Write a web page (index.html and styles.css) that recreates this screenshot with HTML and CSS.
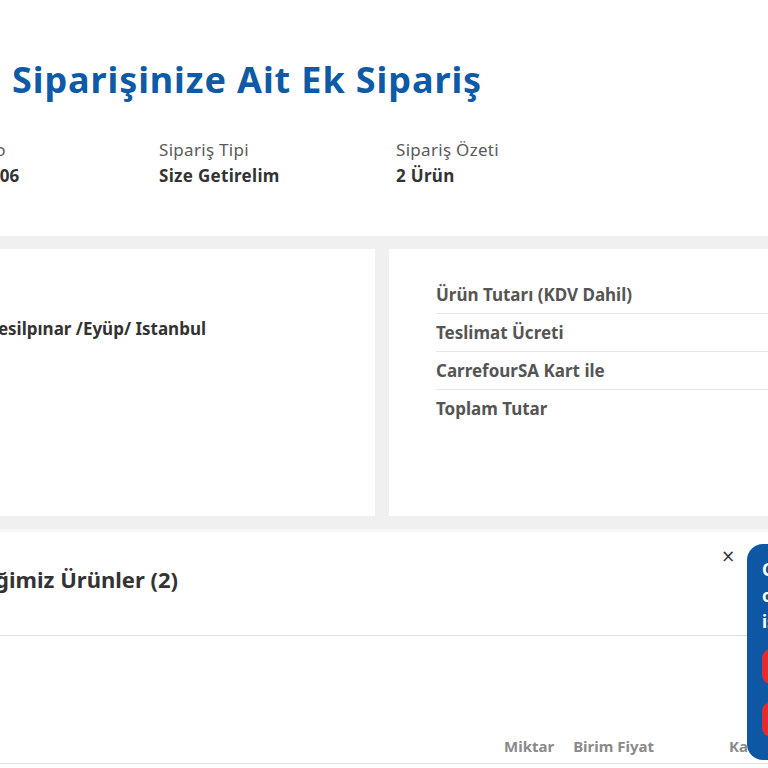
FILE: index.html
```html
<!DOCTYPE html>
<html lang="tr">
<head>
<meta charset="utf-8">
<title>Sipariş Detayı</title>
<link rel="stylesheet" href="styles.css">
</head>
<body>
<div class="page">
  <section class="header">
    <h1 class="title">Siparişinize Ait Ek Sipariş</h1>
    <div class="meta">
      <div class="meta-col">
        <div class="meta-label">Sipariş No</div>
        <div class="meta-value meta-value-id">1000726506</div>
      </div>
      <div class="meta-col">
        <div class="meta-label">Sipariş Tipi</div>
        <div class="meta-value">Size Getirelim</div>
      </div>
      <div class="meta-col">
        <div class="meta-label">Sipariş Özeti</div>
        <div class="meta-value">2 Ürün</div>
      </div>
    </div>
  </section>

  <section class="summary">
    <div class="card card-address">
      <div class="address-line"><span>Yesilpınar /Eyüp/ Istanbul</span></div>
    </div>
    <div class="card card-totals">
      <div class="total-row">Ürün Tutarı (KDV Dahil)</div>
      <div class="total-row">Teslimat Ücreti</div>
      <div class="total-row">CarrefourSA Kart ile</div>
      <div class="total-row">Toplam Tutar</div>
    </div>
  </section>

  <section class="products">
    <div class="products-head">
      <h2 class="products-title"><span>Teslim Edemediğimiz Ürünler (2)</span></h2>
    </div>
    <div class="table-head">
      <span class="th th-qty">Miktar</span>
      <span class="th th-price">Birim Fiyat</span>
      <span class="th th-total">Kampanya</span>
    </div>
    <button class="close" aria-label="Kapat">&#215;</button>
    <div class="popup">
      <p class="popup-text">Ceza puanı<br>oluştu, lütfen<br>işleminizi yapın</p>
      <div class="popup-btn"></div>
      <div class="popup-btn"></div>
    </div>
  </section>
</div>
</body>
</html>
```

FILE: styles.css
```css
html, body {
  margin: 0;
  padding: 0;
  background: #ffffff;
  overflow: hidden;
}

body {
  width: 768px;
  height: 768px;
  font-family: "Noto Sans", "Liberation Sans", sans-serif;
  color: #333333;
}

.page {
  width: 768px;
}

.header {
  height: 236px;
  padding-left: 12px;
  box-sizing: border-box;
  padding-top: 57px;
}

.title {
  margin: 0;
  font-size: 36px;
  line-height: 46px;
  font-weight: 700;
  letter-spacing: 0.9px;
  color: #0d5aa7;
  white-space: nowrap;
}

.meta {
  display: flex;
  margin-left: -90px;
  margin-top: 34px;
}

.meta-col {
  width: 237px;
  flex: none;
}

.meta-label {
  font-size: 17px;
  line-height: 26px;
  letter-spacing: 0.3px;
  color: #5a5a5a;
}

.meta-value {
  font-size: 17px;
  line-height: 26px;
  font-weight: 700;
  letter-spacing: 0.3px;
  color: #333333;
  white-space: nowrap;
}

.meta-value-id {
  letter-spacing: 0;
}

.summary {
  background: #f0f0f0;
  padding: 13px 0;
  display: grid;
  grid-template-columns: 375px 1fr;
  gap: 14px;
  height: 293px;
  box-sizing: border-box;
}

.card {
  background: #ffffff;
  height: 267px;
}

.card-address {
  padding-top: 68px;
  box-sizing: border-box;
}

.address-line {
  display: flex;
  justify-content: flex-end;
  width: 206px;
  white-space: nowrap;
  font-size: 17px;
  line-height: 24px;
  font-weight: 700;
  color: #333333;
}

.card-totals {
  padding-top: 27px;
  padding-left: 47px;
  box-sizing: border-box;
}

.total-row {
  height: 37px;
  display: flex;
  align-items: center;
  border-bottom: 1px solid #e6e6e6;
  font-size: 17px;
  font-weight: 700;
  color: #555555;
  white-space: nowrap;
}

.total-row:last-child {
  border-bottom: none;
}

.products {
  position: relative;
  border-top: 3px solid #f8f8f8;
  height: 239px;
}

.products-head {
  height: 104px;
  padding-bottom: 10px;
  box-sizing: border-box;
  border-bottom: 1px solid #dddddd;
  display: flex;
  align-items: center;
}

.products-title {
  margin: 0;
  display: flex;
  justify-content: flex-end;
  width: 178px;
  white-space: nowrap;
  font-size: 22px;
  font-weight: 700;
  color: #333333;
}

.table-head {
  height: 128px;
  border-bottom: 1px solid #dddddd;
  display: flex;
  align-items: flex-end;
  padding-bottom: 7px;
  box-sizing: border-box;
}

.th {
  font-size: 15px;
  font-weight: 700;
  color: #8a8a8a;
  white-space: nowrap;
}

.th-qty {
  margin-left: 504px;
}

.th-price {
  margin-left: 19px;
}

.th-total {
  margin-left: 75px;
}

.close {
  position: absolute;
  left: 720px;
  top: 14px;
  border: none;
  background: transparent;
  padding: 0;
  width: 16px;
  height: 20px;
  font-family: "DejaVu Sans", sans-serif;
  font-size: 17px;
  line-height: 20px;
  color: #333333;
}

.popup {
  position: absolute;
  left: 747px;
  top: 12px;
  width: 220px;
  height: 216px;
  background: #0d57a4;
  border-radius: 16px;
  padding: 13px 15px;
  box-sizing: border-box;
}

.popup-text {
  margin: 0 0 14px;
  font-size: 17px;
  line-height: 26px;
  font-weight: 700;
  color: #ffffff;
  white-space: nowrap;
}

.popup-btn {
  height: 35px;
  border-radius: 9px;
  background: #e42a2d;
  margin-bottom: 18px;
}
```
